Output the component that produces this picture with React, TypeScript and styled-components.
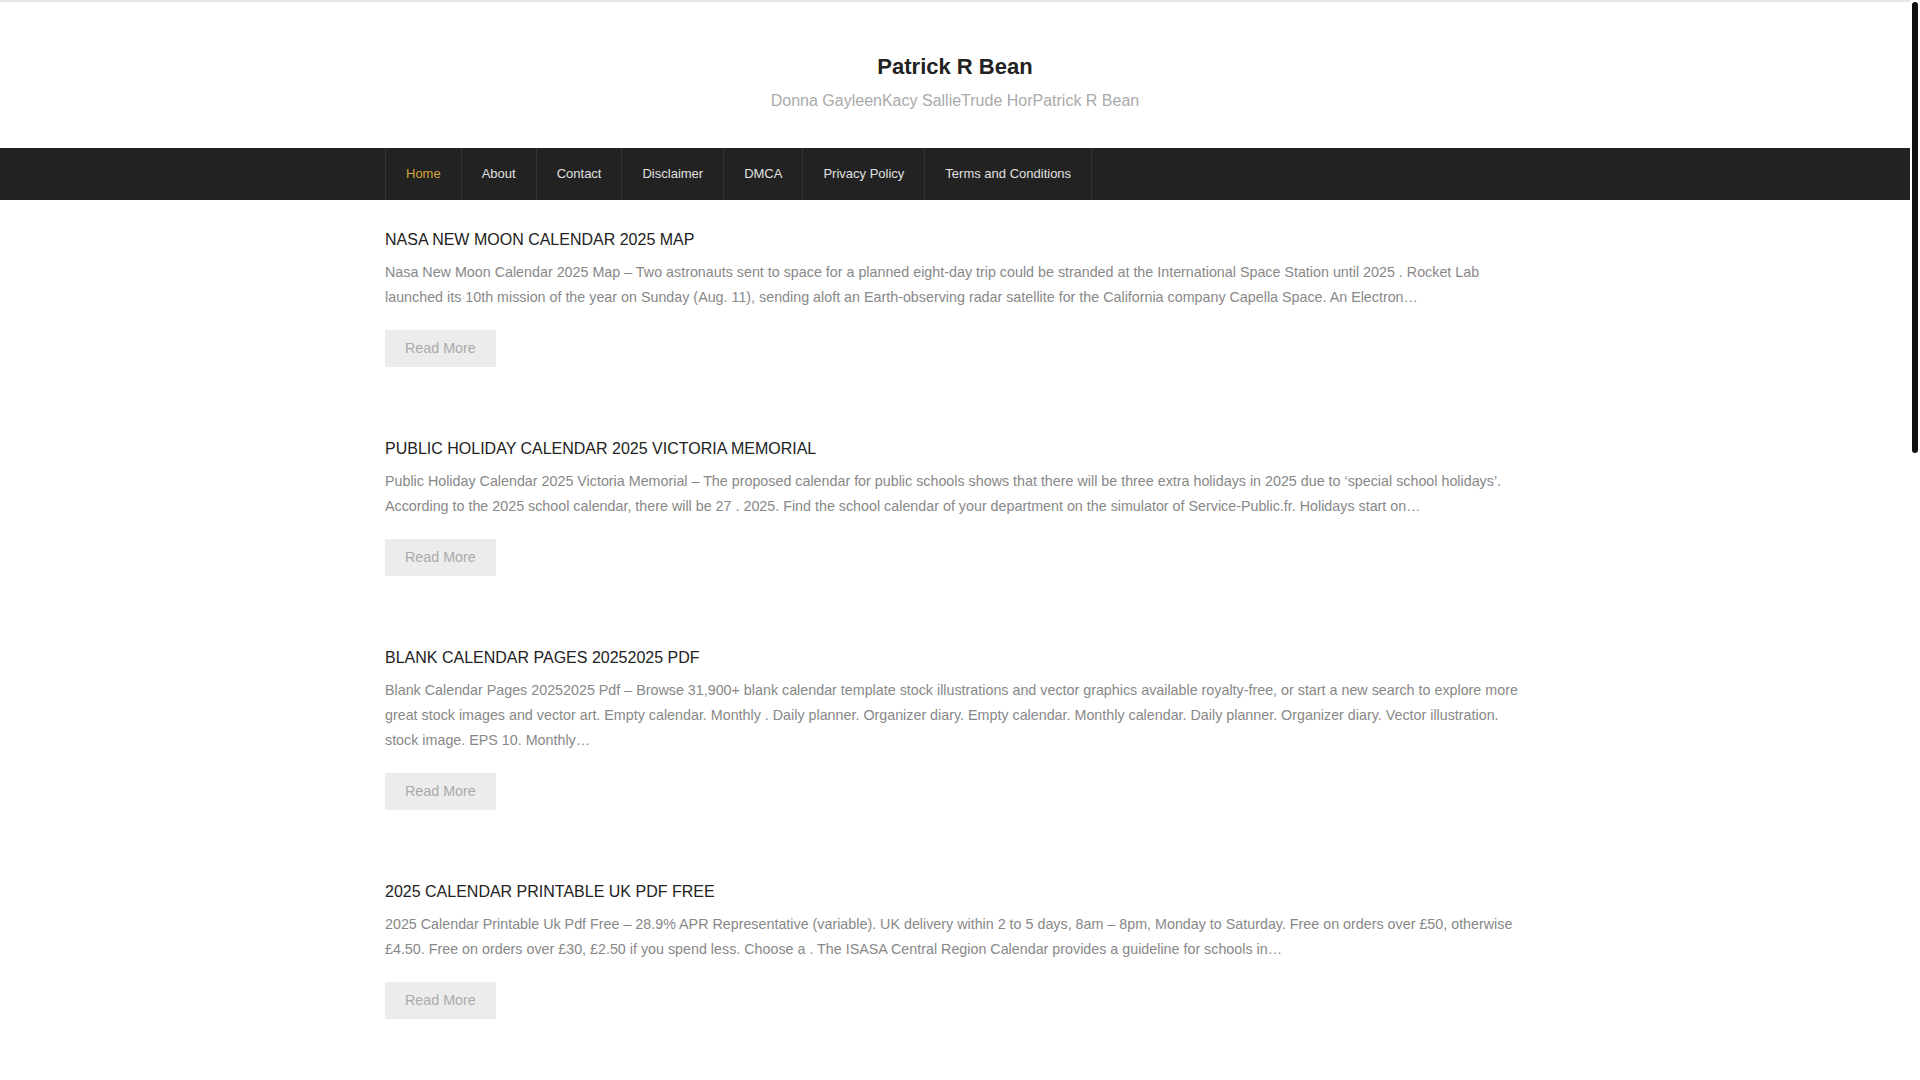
import React from 'react'
import styled, { createGlobalStyle } from 'styled-components'

type Post = {
  title: string
  excerpt: string
}

const GlobalStyle = createGlobalStyle`
  html, body {
    margin: 0;
    padding: 0;
    background: #fff;
  }
  body {
    font-family: "Liberation Sans", Arial, sans-serif;
    color: #222;
    margin-right: 10px;
  }
`

const ScrollTrack = styled.div`
  position: fixed;
  top: 0;
  right: 0;
  width: 10px;
  height: 100vh;
  background: #fff;
`

const ScrollThumb = styled.div`
  margin: 2px 0 0 2px;
  width: 6px;
  height: 451px;
  border-radius: 3px;
  background: #111;
`

const Page = styled.div`
  border-top: 2px solid #e6e6e6;
`

const Header = styled.header`
  padding: 51px 0 36px;
  text-align: center;
`

const SiteTitle = styled.h1`
  margin: 0;
  font-size: 22px;
  line-height: 28px;
  font-weight: bold;
  color: #222;
`

const Tagline = styled.p`
  margin: 9px 0 0;
  font-size: 16px;
  line-height: 22px;
  color: #aaa;
`

const NavBar = styled.nav`
  background: #222;
`

const Container = styled.div`
  width: 1140px;
  margin: 0 auto;
`

const Menu = styled.ul`
  display: flex;
  list-style: none;
  margin: 0;
  padding: 0;
`

const MenuItem = styled.li`
  border-left: 1px solid #333;
  &:last-child {
    border-right: 1px solid #333;
  }
`

const MenuLink = styled.a<{ $active?: boolean }>`
  display: block;
  padding: 0 20px;
  line-height: 52px;
  font-size: 13px;
  text-decoration: none;
  color: ${p => (p.$active ? '#d4a33b' : '#e0e0e0')};
`

const Main = styled.main`
  padding: 30px 0 40px;
`

const Article = styled.article`
  margin-bottom: 72px;
  &:last-child {
    margin-bottom: 0;
  }
`

const PostTitle = styled.h2`
  margin: 0 0 10px;
  font-size: 16px;
  line-height: 20px;
  font-weight: normal;
  text-transform: uppercase;
  a {
    color: #222;
    text-decoration: none;
  }
`

const Excerpt = styled.p`
  margin: 0 0 20px;
  font-size: 14.3px;
  line-height: 25px;
  color: #888;
`

const ReadMore = styled.a`
  display: inline-block;
  padding: 10px 20px;
  line-height: 17px;
  font-size: 14.3px;
  background: #ececec;
  color: #aaa;
  text-decoration: none;
`

const menu = ['Home', 'About', 'Contact', 'Disclaimer', 'DMCA', 'Privacy Policy', 'Terms and Conditions']

const posts: Post[] = [
  {
    title: 'Nasa New Moon Calendar 2025 Map',
    excerpt:
      'Nasa New Moon Calendar 2025 Map – Two astronauts sent to space for a planned eight-day trip could be stranded at the International Space Station until 2025 . Rocket Lab launched its 10th mission of the year on Sunday (Aug. 11), sending aloft an Earth-observing radar satellite for the California company Capella Space. An Electron…',
  },
  {
    title: 'Public Holiday Calendar 2025 Victoria Memorial',
    excerpt:
      'Public Holiday Calendar 2025 Victoria Memorial – The proposed calendar for public schools shows that there will be three extra holidays in 2025 due to ‘special school holidays’. According to the 2025 school calendar, there will be 27 . 2025. Find the school calendar of your department on the simulator of Service-Public.fr. Holidays start on…',
  },
  {
    title: 'Blank Calendar Pages 20252025 Pdf',
    excerpt:
      'Blank Calendar Pages 20252025 Pdf – Browse 31,900+ blank calendar template stock illustrations and vector graphics available royalty-free, or start a new search to explore more great stock images and vector art. Empty calendar. Monthly . Daily planner. Organizer diary. Empty calendar. Monthly calendar. Daily planner. Organizer diary. Vector illustration. stock image. EPS 10. Monthly…',
  },
  {
    title: '2025 Calendar Printable Uk Pdf Free',
    excerpt:
      '2025 Calendar Printable Uk Pdf Free – 28.9% APR Representative (variable). UK delivery within 2 to 5 days, 8am – 8pm, Monday to Saturday. Free on orders over £50, otherwise £4.50. Free on orders over £30, £2.50 if you spend less. Choose a . The ISASA Central Region Calendar provides a guideline for schools in…',
  },
]

export default function App() {
  return (
    <Page>
      <GlobalStyle />
      <Header>
        <SiteTitle>Patrick R Bean</SiteTitle>
        <Tagline>Donna GayleenKacy SallieTrude HorPatrick R Bean</Tagline>
      </Header>
      <NavBar>
        <Container>
          <Menu>
            {menu.map((item, i) => (
              <MenuItem key={item}>
                <MenuLink href="#" $active={i === 0}>{item}</MenuLink>
              </MenuItem>
            ))}
          </Menu>
        </Container>
      </NavBar>
      <Main>
        <Container>
          {posts.map(post => (
            <Article key={post.title}>
              <PostTitle><a href="#">{post.title}</a></PostTitle>
              <Excerpt>{post.excerpt}</Excerpt>
              <ReadMore href="#">Read More</ReadMore>
            </Article>
          ))}
        </Container>
      </Main>
      <ScrollTrack>
        <ScrollThumb />
      </ScrollTrack>
    </Page>
  )
}
